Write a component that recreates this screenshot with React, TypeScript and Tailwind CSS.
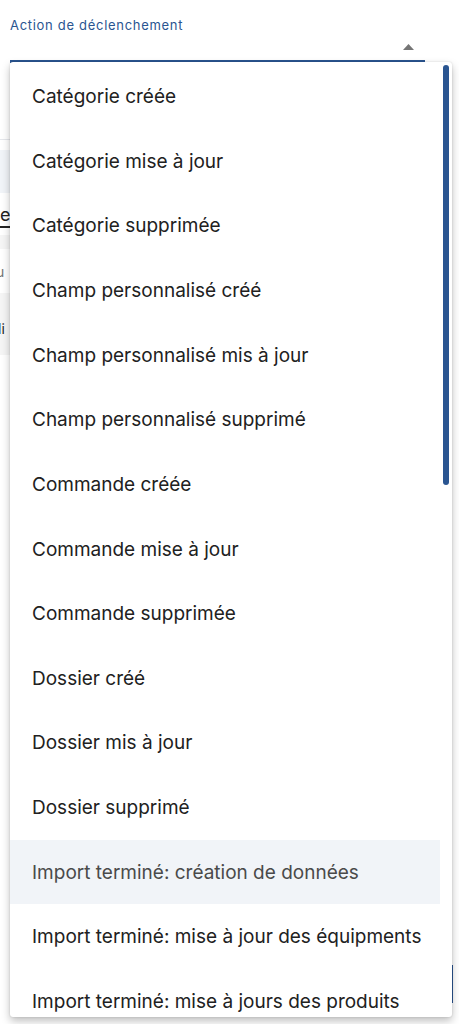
import React from "react";

const items = [
  "Catégorie créée",
  "Catégorie mise à jour",
  "Catégorie supprimée",
  "Champ personnalisé créé",
  "Champ personnalisé mis à jour",
  "Champ personnalisé supprimé",
  "Commande créée",
  "Commande mise à jour",
  "Commande supprimée",
  "Dossier créé",
  "Dossier mis à jour",
  "Dossier supprimé",
  "Import terminé: création de données",
  "Import terminé: mise à jour des équipments",
  "Import terminé: mise à jours des produits",
  "Import terminé: mise à jour des stocks",
];

export default function App() {
  return (
    <div
      className="relative w-[459px] h-[1024px] overflow-hidden bg-white"
      style={{ fontFamily: "Inter, Roboto, 'Noto Sans', sans-serif" }}
    >
      {/* background page content peeking on the left */}
      <div className="absolute left-0 top-[139px] w-[10px] flex flex-col">
        <div className="h-px bg-gray-200" />
        <div className="mt-[10px] h-[43px] bg-[#f1f4f8]" />
        <div className="mt-[11px] text-[18px] leading-[22px] text-[#212121] border-b-2 border-[#212121] w-[12px]">e</div>
        <div className="mt-[7px] h-[14px] bg-[#f5f5f5]" />
        <div className="mt-[16px] -ml-[4px] text-[14px] leading-none text-[#757575]">u</div>
        <div className="mt-[14px] h-[62px] bg-[#f5f5f5] flex items-center pt-[10px]">
          <span className="-ml-[2px] text-[14px] leading-none text-[#212121]">li</span>
        </div>
      </div>
      <div className="absolute left-[450px] top-[965px] w-[3px] h-[38px] bg-[#2a5591]" />

      {/* select field */}
      <div className="absolute left-[10px] top-0 w-[415px] flex flex-col">
        <div className="pt-[17px] text-[13px] leading-[16px] tracking-[0.7px] text-[#2a5591]">
          Action de déclenchement
        </div>
        <div className="h-[27px] flex justify-end items-start pt-[11px] pr-[11px]">
          <svg width="11" height="6" viewBox="0 0 11 6">
            <polygon points="0,6 5.5,0 11,6" fill="#757575" />
          </svg>
        </div>
        <div className="h-[3px] bg-[#2a5591]" />
      </div>

      {/* dropdown menu */}
      <div className="absolute left-[10px] top-[62px] w-[442px] h-[955px] bg-white rounded-[3px] shadow-[0_4px_8px_rgba(0,0,0,0.25),0_0_2px_rgba(0,0,0,0.15)] overflow-hidden flex">
        <div className="w-[430px] flex flex-col pt-[2px]">
          {items.map((t, i) => (
            <div
              key={t}
              className={
                "h-[64.65px] shrink-0 flex items-center pl-[22px] pt-[2px] text-[19px] whitespace-nowrap " +
                (i === 12 ? "bg-[#f1f4f8] text-[#4a4a4a]" : "text-[#212121]")
              }
            >
              {t}
            </div>
          ))}
        </div>
        <div className="pt-[3px] pl-[3px]">
          <div className="w-[6px] h-[420px] rounded-full bg-[#2a5591]" />
        </div>
      </div>
    </div>
  );
}
